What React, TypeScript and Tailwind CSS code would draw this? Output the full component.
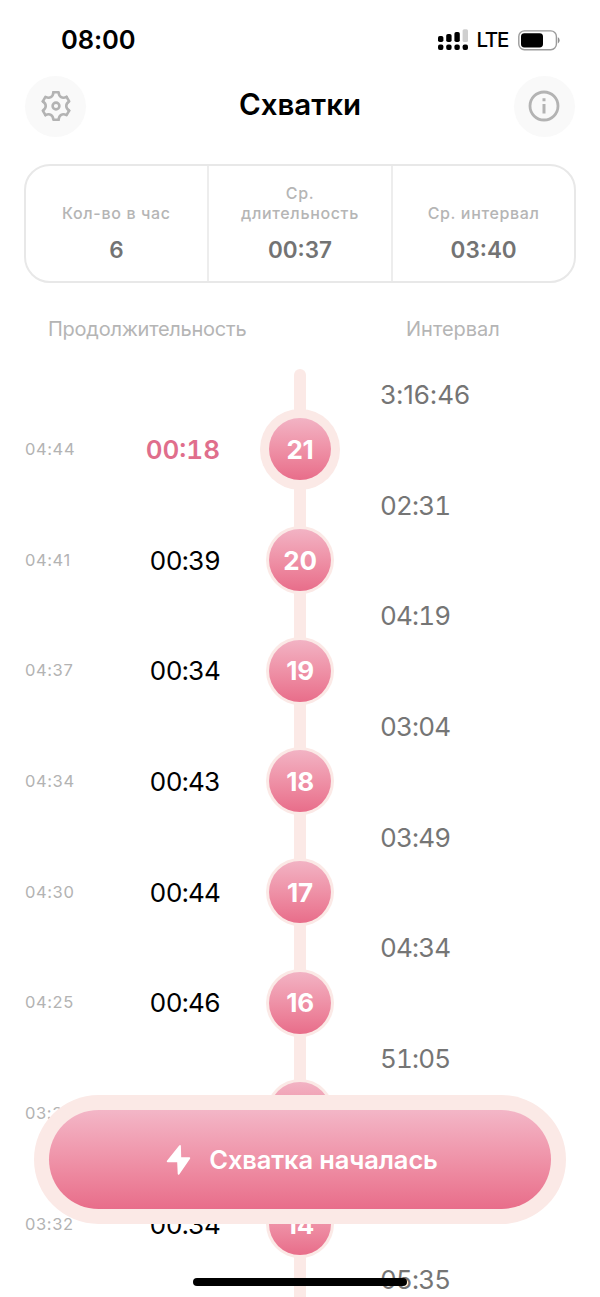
interface Contraction {
  id: number;
  startedAt: string;
  duration: string;
  interval: string;
}

const CONTRACTIONS: Contraction[] = [
  { id: 21, startedAt: '04:44', duration: '00:18', interval: '3:16:46' },
  { id: 20, startedAt: '04:41', duration: '00:39', interval: '02:31' },
  { id: 19, startedAt: '04:37', duration: '00:34', interval: '04:19' },
  { id: 18, startedAt: '04:34', duration: '00:43', interval: '03:04' },
  { id: 17, startedAt: '04:30', duration: '00:44', interval: '03:49' },
  { id: 16, startedAt: '04:25', duration: '00:46', interval: '04:34' },
  { id: 15, startedAt: '03:33', duration: '00:41', interval: '51:05' },
  { id: 14, startedAt: '03:32', duration: '00:34', interval: '' },
];

// The last interval belongs to a record that is still below the fold
const INTERVALS = [...CONTRACTIONS.slice(0, 7).map((c) => c.interval), '', '05:35'];

const STATS = [
  { label: 'Кол-во в час', value: '6' },
  { label: 'Ср. длительность', value: '00:37' },
  { label: 'Ср. интервал', value: '03:40' },
];

const GEAR_TEETH = [0, 60, 120, 180, 240, 300];

function StatusBar() {
  return (
    <div className="flex h-[76px] items-center justify-between pt-1 pr-10 pl-[61px]">
      <span className="text-[25.5px] font-semibold leading-none tracking-[-0.1px]">08:00</span>
      <div className="flex items-center">
        <svg width="31" height="22" viewBox="0 0 31 22">
          <rect x="0" y="7" width="5.4" height="6" rx="1.8" />
          <rect x="8.2" y="5" width="5.4" height="8" rx="1.8" />
          <rect x="16.4" y="3" width="5.4" height="10" rx="1.8" />
          <rect x="24.6" y="0.2" width="5.4" height="12.8" rx="1.5" fill="#cfcfcf" />
          <rect x="0" y="15.6" width="5.4" height="5.4" rx="1.9" />
          <rect x="8.2" y="15.6" width="5.4" height="5.4" rx="1.9" />
          <rect x="16.4" y="15.6" width="5.4" height="5.4" rx="1.9" />
          <rect x="24.6" y="15.6" width="5.4" height="5.4" rx="1.9" />
        </svg>
        <span className="ml-[7px] text-[20.5px] font-medium leading-none tracking-[-1.3px]">LTE</span>
        <svg className="ml-[10px]" width="42" height="21" viewBox="0 0 42 21">
          <rect x="0.8" y="0.9" width="37.6" height="18.8" rx="5.6" fill="none" stroke="#9b9b9b" strokeWidth="1.4" />
          <rect x="3" y="3.2" width="22" height="14.2" rx="3.4" />
          <path d="M39.8 7.2c1.300.6 1.800 1.800 1.800 3.100s-.5 2.500-1.800 3.100z" fill="#8f8f8f" />
        </svg>
      </div>
    </div>
  );
}

function Header() {
  return (
    <header className="flex h-[60px] items-center justify-between px-[25px]">
      <button className="flex size-[61px] items-center justify-center rounded-full bg-[#f9f9f9]">
        <svg width="32" height="32" viewBox="-16 -16 32 32" fill="none" stroke="#b3b3b3" strokeWidth="2.6" strokeLinecap="round" strokeLinejoin="round">
          {GEAR_TEETH.map((angle) => (
            <path key={angle} d="M-2.600-13.700H2.600C3-9 6.290-7.090 10.560-9.100" transform={`rotate(${angle})`} />
          ))}
          <circle r="3.400" />
        </svg>
      </button>
      <h1 className="-mt-[3px] text-[29.5px] font-semibold leading-none">Схватки</h1>
      <button className="flex size-[61px] items-center justify-center rounded-full bg-[#f9f9f9]">
        <svg width="32" height="32" viewBox="0 0 32 32" fill="none" stroke="#b3b3b3">
          <circle cx="16" cy="16" r="14" strokeWidth="2.800" />
          <path d="M16 14v9.500M16 8.200v3" strokeWidth="3" />
        </svg>
      </button>
    </header>
  );
}

function Stats() {
  return (
    <section className="mx-6 mt-[28px] flex h-[119px] rounded-[26px] border-2 border-[#e8e8e8]">
      {STATS.map((stat) => (
        <div
          key={stat.label}
          className="flex flex-1 flex-col items-center justify-end border-r-2 border-[#ededed] pb-[19px] text-center last:border-r-0 nth-2:flex-[1.01]"
        >
          <p className="w-[130px] text-[16px] font-medium leading-5 tracking-[0.65px] text-[#b5b5b5]">{stat.label}</p>
          <p className="mt-[15px] text-[22.500px] font-semibold leading-6 text-[#737373]">{stat.value}</p>
        </div>
      ))}
    </section>
  );
}

function Bubble({ id, active }: { id: number; active: boolean }) {
  return (
    <div className="flex h-[110.7px] items-center justify-center">
      <div className={`relative rounded-full bg-[#fbe9e6] ${active ? 'p-[9.300px]' : 'p-[3px]'}`}>
        <div className="flex size-[62px] items-center justify-center rounded-full bg-linear-to-b from-[#f2b3c4] to-[#e86d8a] text-[26px] font-bold tracking-[-0.2px] text-white">
          {id}
        </div>
      </div>
    </div>
  );
}

function Timeline() {
  return (
    <section className="flex">
      <div className="w-[260px] pt-[55px]">
        {CONTRACTIONS.map((c, index) => (
          <div key={c.id} className="flex h-[110.7px] items-center justify-between pr-10 pl-[25px]">
            <span className="text-[16.5px] tracking-[0.6px] text-[#b3b3b3]">{c.startedAt}</span>
            <span
              className={`text-[26px] tabular-nums ${index === 0 ? 'font-semibold text-[#e06e8c]' : 'tracking-[-0.8px]'}`}
            >
              {c.duration}
            </span>
          </div>
        ))}
      </div>

      <div className="relative w-20 pt-[55px]">
        <div className="absolute top-[30px] left-[34px] h-[1000px] w-3 rounded-full bg-[#fbe9e6]" />
        {CONTRACTIONS.map((c, index) => (
          <Bubble key={c.id} id={c.id} active={index === 0} />
        ))}
      </div>

      <div className="pl-10 text-[26px] text-[#757575]">
        {INTERVALS.map((interval, index) => (
          <div
            key={index}
            className={`flex h-[110.7px] items-center ${index === 0 ? 'tracking-[-0.1px]' : 'tabular-nums tracking-[-0.8px]'}`}
          >
            {interval}
          </div>
        ))}
      </div>
    </section>
  );
}

function StartButton() {
  return (
    <div className="absolute top-[1095px] left-[34px] w-[532px] rounded-full bg-[#fbe9e6] p-[15px]">
      <button className="flex h-[99px] w-full items-center justify-center gap-[18px] rounded-full bg-linear-to-b from-[#f3b6c7] to-[#e86d8a] pt-0.5 pl-1 text-[25.500px] font-semibold tracking-[-0.12px] text-white">
        <svg className="-mt-0.5" width="25" height="32" viewBox="0 0 25 32" fill="currentColor">
          <path d="M13.200 1.600 1 16.800c-.5.700-.2 1.400.6 1.400h9.600l.5 11.600c.1 1.200 1 1.400 1.700.5L24 14.800c.5-.7.2-1.500-.6-1.500h-8.200l-.3-11.100c0-1.300-.9-1.500-1.700-.6z" />
        </svg>
        Схватка началась
      </button>
    </div>
  );
}

export default function App() {
  return (
    <main className="relative h-[1297px] w-[600px] overflow-hidden bg-white font-['Inter',sans-serif] text-black">
      <StatusBar />
      <Header />
      <Stats />
      <div className="flex h-[56px] items-end text-[20px] leading-5 text-[#b5b5b5]">
        <span className="w-[358px] pl-12 tracking-[-0.25px]">Продолжительность</span>
        <span className="pl-12">Интервал</span>
      </div>
      <Timeline />
      <StartButton />
      <div className="absolute top-[1278px] left-[193px] h-2 w-[214px] rounded-full bg-black" />
    </main>
  );
}
